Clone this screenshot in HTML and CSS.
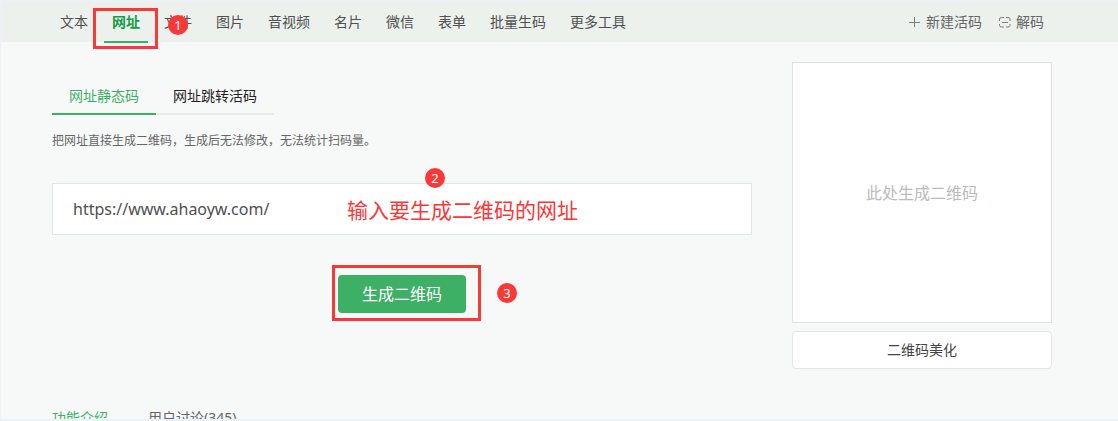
FILE: index.html
```html
<!DOCTYPE html>
<html lang="zh-CN">
<head>
    <meta charset="UTF-8">
    <meta name="viewport" content="width=device-width, initial-scale=1.0">
    <title>网址二维码生成</title>
    <link rel="stylesheet" href="styles.css">
</head>
<body>
    <div class="page">
        <header class="topbar">
            <nav class="nav">
                <a href="#">文本</a>
                <a href="#" class="active">网址<span class="mark mark-nav"></span></a>
                <a href="#">文件<span class="badge badge-nav">1</span></a>
                <a href="#">图片</a>
                <a href="#">音视频</a>
                <a href="#">名片</a>
                <a href="#">微信</a>
                <a href="#">表单</a>
                <a href="#">批量生码</a>
                <a href="#">更多工具</a>
            </nav>
            <div class="tools">
                <a href="#">
                    <svg width="12" height="12" viewBox="0 0 12 12"><path d="M5.500 1v10M0 6.500h11"/></svg>
                    新建活码
                </a>
                <a href="#">
                    <svg width="12" height="12" viewBox="0 0 12 12"><path d="M5 1.500H2.500Q.500 1.500 .500 3V5M7 1.500h2q2 0 2 1.500V5M.500 8v1.500Q.500 11 2.500 11H5M11 8v1.500Q11 11 9 11H7M3 6.500h6"/></svg>
                    解码
                </a>
            </div>
        </header>

        <main class="content">
            <section class="editor">
                <div class="tabs">
                    <button type="button" class="tab active">网址静态码</button>
                    <button type="button" class="tab">网址跳转活码</button>
                </div>
                <p class="desc">把网址直接生成二维码，生成后无法修改，无法统计扫码量。</p>
                <form class="url-form">
                    <div class="field">
                        <input type="text" class="url-input" aria-label="网址" value="https://www.ahaoyw.com/">
                        <span class="hint">输入要生成二维码的网址</span>
                        <span class="badge badge-field">2</span>
                    </div>
                    <div class="submit">
                        <button type="button" class="generate">生成二维码</button>
                        <span class="mark mark-submit"></span>
                        <span class="badge badge-submit">3</span>
                    </div>
                </form>
            </section>
            <aside class="side">
                <div class="preview">此处生成二维码</div>
                <button type="button" class="beautify">二维码美化</button>
            </aside>
        </main>

        <div class="more">
            <a href="#" class="active">功能介绍</a>
            <a href="#">用户讨论(345)</a>
        </div>
    </div>
</body>
</html>
```
FILE: styles.css
```css
* {
    margin: 0;
    padding: 0;
    box-sizing: border-box;
}
body {
    height: 100vh;
    padding: 1px 0 2px 1px;
    overflow: hidden;
    background: #ebf2f9;
    color: #505050;
    font-family: "Noto Sans", "Noto Sans CJK SC", sans-serif;
    font-size: 14px;
    line-height: 20px;
}
a {
    color: inherit;
    text-decoration: none;
}
button, input {
    font: inherit;
}
button {
    cursor: pointer;
}
.page {
    height: 100%;
    overflow: hidden;
    background: #f7f9f8;
}

/* top bar */
.topbar {
    display: flex;
    justify-content: space-between;
    height: 41px;
    padding: 0 66px 0 51px;
    background: #ecf1ed;
}
.nav {
    display: flex;
    gap: 8px;
}
.nav a {
    position: relative;
    padding: 0 8px;
    line-height: 42px;
}
.nav a.active {
    color: #169b48;
    font-weight: bold;
}
.nav a.active::after {
    content: '';
    position: absolute;
    left: 0;
    right: 0;
    bottom: -1px;
    height: 2px;
    background: #3eb066;
}
.tools {
    display: flex;
    gap: 17px;
    padding-right: 8px;
    color: #666;
    line-height: 42px;
}
.tools a {
    display: flex;
    align-items: center;
    gap: 5px;
}
.tools svg {
    fill: none;
    stroke: #7c7c7c;
}

/* main area */
.content {
    display: flex;
    gap: 40px;
    padding: 20px 66px 0 51px;
}
.editor {
    flex: 1;
    padding-top: 16px;
}
.tabs {
    display: flex;
}
.tab {
    height: 37px;
    padding: 0 17px;
    border: 0;
    border-bottom: 2px solid #e8eae9;
    background: none;
    color: #222;
}
.tab.active {
    border-color: #3eb066;
    color: #3eb066;
}
.desc {
    margin-top: 16px;
    color: #666;
    font-size: 12px;
}
.field {
    position: relative;
    margin-top: 32px;
}
.url-input {
    display: block;
    width: 100%;
    height: 52px;
    padding: 0 20px;
    border: 1px solid #e4e6e5;
    background: #fff;
    color: #505050;
    font-size: 16px;
}
.submit {
    position: relative;
    width: 128px;
    margin: 40px auto 0;
}
.generate {
    display: block;
    width: 100%;
    height: 38px;
    border: 0;
    border-radius: 4px;
    background: #3eb066;
    color: #fff;
    font-size: 16px;
}
.side {
    width: 260px;
}
.preview {
    display: flex;
    align-items: center;
    justify-content: center;
    height: 261px;
    border: 1px solid #e0e2e1;
    background: #fff;
    color: #bbb;
    font-size: 16px;
}
.beautify {
    width: 100%;
    height: 38px;
    margin-top: 8px;
    border: 1px solid #e4e6e5;
    border-radius: 4px;
    background: #fff;
    color: #444;
}
.more {
    display: flex;
    gap: 40px;
    padding: 39px 51px 0;
    color: #666;
}
.more .active {
    color: #3eb066;
}

/* step marks lying over the page */
.badge {
    position: absolute;
    width: 20px;
    height: 20px;
    border-radius: 50%;
    background: #fb3838;
    color: #fff;
    font-size: 13px;
    line-height: 20px;
    text-align: center;
}
.badge-nav {
    top: 14px;
    left: 12px;
}
.badge-field {
    top: -15px;
    left: 373px;
}
.badge-submit {
    top: 8px;
    left: 159px;
}
.mark {
    position: absolute;
    z-index: 1;
    border: 3px solid #fb3838;
}
.mark-nav {
    top: 7px;
    right: -10px;
    bottom: -7px;
    left: -11px;
}
.mark-submit {
    top: -10px;
    right: -15px;
    bottom: -8px;
    left: -6px;
}
.hint {
    position: absolute;
    top: 13px;
    left: 295px;
    color: #fb3838;
    font-size: 21px;
    line-height: 28px;
}
```
